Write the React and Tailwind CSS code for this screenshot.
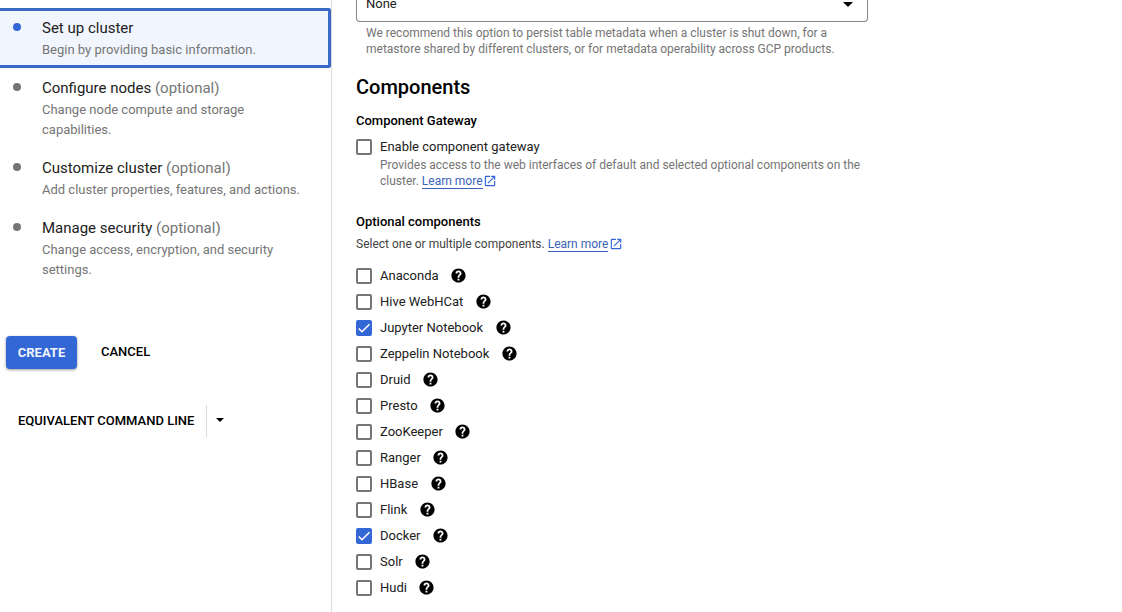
const steps = [
  { title: 'Set up cluster', lines: ['Begin by providing basic information.'], active: true },
  { title: 'Configure nodes', optional: true, lines: ['Change node compute and storage', 'capabilities.'] },
  { title: 'Customize cluster', optional: true, lines: ['Add cluster properties, features, and actions.'] },
  { title: 'Manage security', optional: true, lines: ['Change access, encryption, and security', 'settings.'] },
];

const components = [
  ['Anaconda', false],
  ['Hive WebHCat', false],
  ['Jupyter Notebook', true],
  ['Zeppelin Notebook', false],
  ['Druid', false],
  ['Presto', false],
  ['ZooKeeper', false],
  ['Ranger', false],
  ['HBase', false],
  ['Flink', false],
  ['Docker', true],
  ['Solr', false],
  ['Hudi', false],
];

function Checkbox({ checked }) {
  return (
    <span
      className={
        'flex size-4 shrink-0 items-center justify-center rounded-[2px] border-2 ' +
        (checked ? 'border-[#3367d6] bg-[#3367d6]' : 'border-[#757575] bg-white')
      }
    >
      {checked && (
        <svg viewBox="0 0 24 24" className="size-4 shrink-0" fill="none" stroke="#fff" strokeWidth="2.3">
          <path d="M4.1 12.7 9 17.6 20.3 6.3" />
        </svg>
      )}
    </span>
  );
}

function HelpIcon() {
  return (
    <svg viewBox="0 0 24 24" className="-mt-[2px] ml-[11.5px] size-[17px] shrink-0" fill="#000">
      <path d="M12 2C6.48 2 2 6.48 2 12s4.48 10 10 10 10-4.48 10-10S17.520 2 12 2zm1.300 17h-2.600v-2.500h2.600V19zm2.070-7.750-.9.920C13.450 12.900 13.300 13.500 13.300 15h-2.600v-.5c0-1.100.45-2.100 1.170-2.830l1.240-1.260c.37-.36.500-.86.500-1.410 0-1-.7-1.650-1.610-1.650S10.400 8 10.400 9H7.800c0-2.300 1.880-4.150 4.200-4.150S16.200 6.700 16.200 9c0 .88-.26 1.680-.83 2.250z" />
    </svg>
  );
}

function LearnMore() {
  return (
    <a href="#" className="inline-flex text-[#3b62b8]">
      <span className="h-4 border-b border-[#3b62b8]">Learn more</span>
      <svg viewBox="0 0 24 24" className="ml-[0.5px] mt-px size-[14px]" fill="#3367d6">
        <path d="M19 19H5V5h7V3H5a2 2 0 0 0-2 2v14a2 2 0 0 0 2 2h14c1.100 0 2-.9 2-2v-7h-2v7zM14 3v2h3.590l-9.830 9.830 1.410 1.410L19 6.410V10h2V3h-7z" />
      </svg>
    </a>
  );
}

function Sidebar() {
  return (
    <aside className="flex w-[332px] shrink-0 flex-col border-r border-[#dadce0] pt-2">
      {steps.map((step) => (
        <div
          key={step.title}
          className={
            'flex py-[5px] pl-[13px] ' +
            (step.active
              ? 'rounded-r-[3px] border-y-[3px] border-r-[3px] border-[#3b69c6] bg-[#f0f5fe]'
              : 'border-y-[3px] border-transparent')
          }
        >
          <span
            className={
              'mt-[7px] size-2 shrink-0 rounded-full ' + (step.active ? 'bg-[#3367d6]' : 'bg-[#757575]')
            }
          />
          <div className="ml-[21px] whitespace-nowrap text-[#757575]">
            <div className="text-[15px] leading-6">
              <span className="text-[#212121]">{step.title}</span>
              {step.optional && ' (optional)'}
            </div>
            {step.lines.map((line) => (
              <div key={line} className="text-[13px] leading-5">
                {line}
              </div>
            ))}
          </div>
        </div>
      ))}
      <div className="mt-12 flex items-center pl-[6px] text-[13px] font-medium">
        <button className="h-[33px] w-[71px] rounded-[4px] bg-[#3367d6] pt-px font-bold text-[#f0f5fe] shadow-[0_1px_3px_rgba(0,0,0,0.4)]">
          CREATE
        </button>
        <button className="ml-6 -mt-px text-black">CANCEL</button>
      </div>
      <div className="mt-9 flex h-8 items-center pl-[18px] text-[13px] font-medium text-black">
        <button>EQUIVALENT COMMAND LINE</button>
        <span className="ml-3 h-8 w-px bg-[#dadce0]" />
        <svg viewBox="0 0 8 4" className="-mt-[2px] ml-[9px] h-1 w-2">
          <path d="M0 0h8L4 4z" />
        </svg>
      </div>
    </aside>
  );
}

export default function App() {
  return (
    <div className="flex h-[612px] w-[1122px] overflow-hidden bg-white font-[Roboto,'Liberation_Sans',sans-serif] text-[#212121]">
      <Sidebar />
      <main className="flex flex-col pl-6">
        <div className="flex h-[22px] w-[512px] shrink-0 justify-between rounded-b-[4px] border border-t-0 border-[#80868b] pl-[9px] pr-[14px]">
          <span className="-mt-[6px] text-[13px] leading-5">None</span>
          <svg viewBox="0 0 10 5" className="mt-[2px] h-[5px] w-[10px]">
            <path d="M0 0h10L5 5z" />
          </svg>
        </div>
        <div className="mt-[3px] whitespace-nowrap pl-[10px] text-[12px] leading-4 text-[#757575]">
          <p>We recommend this option to persist table metadata when a cluster is shut down, for a</p>
          <p>metastore shared by different clusters, or for metadata operability across GCP products.</p>
        </div>
        <h2 className="mt-[18px] text-[20px] font-medium leading-6 text-black">Components</h2>
        <h3 className="mt-3 text-[13px] font-medium leading-5 text-black">Component Gateway</h3>
        <div className="mt-[7px] flex gap-2">
          <div className="pt-px">
            <Checkbox />
          </div>
          <div className="whitespace-nowrap text-[12px] leading-4 text-[#757575]">
            <p className="mb-px text-[13px] leading-[18px] text-[#212121]">Enable component gateway</p>
            <p>Provides access to the web interfaces of default and selected optional components on the</p>
            <p className="flex gap-[3px]">
              cluster. <LearnMore />
            </p>
          </div>
        </div>
        <h3 className="mt-[23px] text-[13px] font-medium leading-5 text-black">Optional components</h3>
        <p className="mt-1 flex gap-[3px] text-[12px] leading-4 text-[#424242]">
          Select one or multiple components. <LearnMore />
        </p>
        <ul className="mt-[11px]">
          {components.map(([name, checked]) => (
            <li key={name} className="flex h-[26px] items-center">
              <span className="-mt-px">
                <Checkbox checked={checked} />
              </span>
              <span className="ml-2 text-[13px] leading-5">{name}</span>
              <HelpIcon />
            </li>
          ))}
        </ul>
      </main>
    </div>
  );
}
